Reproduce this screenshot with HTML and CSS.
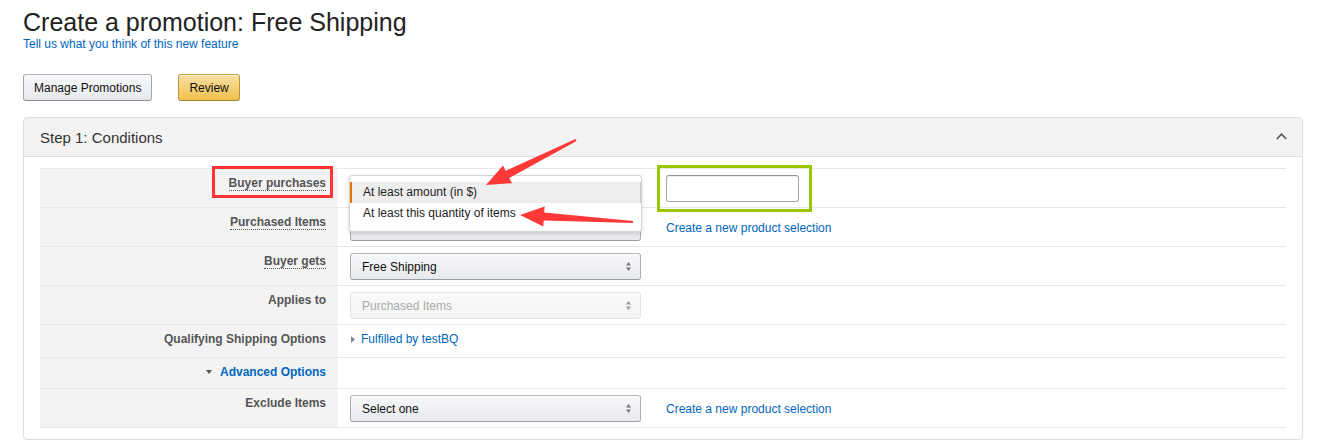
FILE: index.html
```
<!DOCTYPE html>
<html lang="en">
<head>
    <meta charset="UTF-8">
    <title>Create a promotion: Free Shipping</title>
    <link rel="stylesheet" href="styles.css">
</head>
<body>
<div class="page">
    <h1 class="title">Create a promotion: Free Shipping</h1>
    <a class="link feedback" href="#">Tell us what you think of this new feature</a>

    <div class="actions">
        <button class="btn">Manage Promotions</button>
        <button class="btn btn-primary">Review</button>
    </div>

    <div class="panel">
        <div class="panel-head">
            <span>Step 1: Conditions</span>
            <svg class="chevron" width="11" height="7" viewBox="0 0 11 7"><polyline points="0.8,6 5.5,1.2 10.2,6" fill="none" stroke="#555" stroke-width="1.6"/></svg>
        </div>
        <div class="panel-body">
            <div class="form-table">
                <!-- Buyer purchases -->
                <div class="row">
                    <div class="label"><span class="dotted">Buyer purchases</span></div>
                    <div class="value">
                        <div class="select select-open">
                            <span class="current">At least amount (in $)</span>
                            <svg class="caret" width="5" height="9" viewBox="0 0 5 9"><path d="M2.5 0 L5 3.5 H0 Z M0 5.5 H5 L2.5 9 Z" fill="#777"/></svg>
                            <ul class="dropdown">
                                <li class="active">At least amount (in $)</li>
                                <li>At least this quantity of items</li>
                            </ul>
                        </div>
                        <input class="text-input" type="text">
                    </div>
                </div>

                <!-- Purchased items -->
                <div class="row">
                    <div class="label"><span class="dotted">Purchased Items</span></div>
                    <div class="value">
                        <div class="select">
                            <span>Select one</span>
                            <svg class="caret" width="5" height="9" viewBox="0 0 5 9"><path d="M2.5 0 L5 3.5 H0 Z M0 5.5 H5 L2.5 9 Z" fill="#777"/></svg>
                        </div>
                        <a class="link" href="#">Create a new product selection</a>
                    </div>
                </div>

                <!-- Buyer gets -->
                <div class="row">
                    <div class="label"><span class="dotted">Buyer gets</span></div>
                    <div class="value">
                        <div class="select">
                            <span>Free Shipping</span>
                            <svg class="caret" width="5" height="9" viewBox="0 0 5 9"><path d="M2.5 0 L5 3.5 H0 Z M0 5.5 H5 L2.5 9 Z" fill="#777"/></svg>
                        </div>
                    </div>
                </div>

                <!-- Applies to -->
                <div class="row">
                    <div class="label">Applies to</div>
                    <div class="value">
                        <div class="select disabled">
                            <span>Purchased Items</span>
                            <svg class="caret" width="5" height="9" viewBox="0 0 5 9"><path d="M2.5 0 L5 3.5 H0 Z M0 5.5 H5 L2.5 9 Z" fill="#999"/></svg>
                        </div>
                    </div>
                </div>

                <!-- Shipping options -->
                <div class="row">
                    <div class="label">Qualifying Shipping Options</div>
                    <div class="value value-text">
                        <svg class="tri-right" width="4" height="7" viewBox="0 0 4 7"><path d="M0 0 L4 3.5 L0 7 Z" fill="#888"/></svg>
                        <a class="link" href="#">Fulfilled by testBQ</a>
                    </div>
                </div>

                <!-- Advanced options -->
                <div class="row row-short">
                    <div class="label">
                        <a class="link advanced" href="#">
                            <svg class="tri-down" width="6" height="4" viewBox="0 0 6 4"><path d="M0 0 H6 L3 4 Z" fill="#555"/></svg>
                            Advanced Options
                        </a>
                    </div>
                    <div class="value"></div>
                </div>

                <!-- Exclude items -->
                <div class="row">
                    <div class="label">Exclude Items</div>
                    <div class="value">
                        <div class="select">
                            <span>Select one</span>
                            <svg class="caret" width="5" height="9" viewBox="0 0 5 9"><path d="M2.5 0 L5 3.5 H0 Z M0 5.5 H5 L2.5 9 Z" fill="#777"/></svg>
                        </div>
                        <a class="link" href="#">Create a new product selection</a>
                    </div>
                </div>
            </div>
        </div>
    </div>

    <!-- annotazioni screenshot -->
    <div class="mark mark-red"></div>
    <div class="mark mark-green"></div>
    <svg class="arrows" width="1329" height="447" viewBox="0 0 1329 447">
        <polygon fill="#ff3838" points="486,185 512,183.2 509.3,177.9 576.5,140.9 575.5,139.1 505.7,170.7 503,165.4"/>
        <polygon fill="#ff3838" points="520,215 544.6,206.5 544.2,212.5 633,221 633,223 543.7,220.5 543.3,226.5"/>
    </svg>
</div>
</body>
</html>
```

FILE: styles.css
```
body {
    margin: 0;
    font-family: "Liberation Sans", Arial, sans-serif;
    color: #111;
    background: #fff;
}

.page {
    position: relative;
    width: 1280px;
    padding: 7px 23px 0;
}

.title {
    margin: 0;
    font-size: 25px;
    line-height: 30px;
    font-weight: normal;
    color: #222;
}

.link {
    color: #0066c0;
    text-decoration: none;
    font-size: 12px;
    line-height: 14px;
}

.feedback {
    display: block;
}

.actions {
    display: flex;
    gap: 26px;
    margin-top: 23px;
}

.btn {
    height: 27px;
    padding: 0 10px;
    font-family: inherit;
    font-size: 12px;
    color: #111;
    border: 1px solid #adb1b8;
    border-color: #adb1b8 #a2a6ac #8d9096;
    border-radius: 3px;
    background: linear-gradient(to bottom, #f7f8fa, #e7e9ec);
    box-shadow: 0 1px 0 rgba(255, 255, 255, 0.6) inset;
}

.btn-primary {
    border-color: #c8a140 #b8963a #a88734;
    background: linear-gradient(to bottom, #f7dfa5, #f0c14b);
}

.panel {
    margin-top: 16px;
    border: 1px solid #ddd;
    border-radius: 4px;
}

.panel-head {
    display: flex;
    align-items: center;
    justify-content: space-between;
    height: 38px;
    padding: 0 15px 0 16px;
    background: #f3f3f3;
    border-bottom: 1px solid #ddd;
    border-radius: 4px 4px 0 0;
    font-size: 15px;
    color: #333;
}

.chevron {
    margin-top: -1px;
}

.panel-body {
    padding: 11px 16px;
}

.row {
    display: grid;
    grid-template-columns: 298px 1fr;
    border-top: 1px solid #e7e7e7;
}

.row:last-child {
    border-bottom: 1px solid #e7e7e7;
}

.label {
    background: #f3f3f3;
    text-align: right;
    padding: 6px 12px 10px;
    font-size: 12px;
    line-height: 16px;
    font-weight: bold;
    color: #555;
}

.row-short .label {
    padding-bottom: 8px;
}

.dotted {
    border-bottom: 1px dotted #555;
}

.value {
    display: flex;
    align-items: center;
    gap: 25px;
    padding: 6px 12px 5px;
}

.value-text {
    gap: 6px;
    padding-bottom: 10px;
    align-items: center;
    height: 16px;
}

.value-text .tri-right {
    margin-left: 1px;
}

.select {
    position: relative;
    display: flex;
    align-items: center;
    justify-content: space-between;
    box-sizing: border-box;
    width: 291px;
    height: 27px;
    padding: 0 9px 0 11px;
    font-size: 12px;
    color: #111;
    border: 1px solid #adb1b8;
    border-color: #b4b7bd #aaadb3 #9a9da3;
    border-radius: 3px;
    background: linear-gradient(to bottom, #f7f8fa, #e7e9ec);
    box-shadow: 0 1px 0 rgba(255, 255, 255, 0.6) inset;
}

/* il valore corrente resta sotto la lista aperta */
.select-open .current {
    visibility: hidden;
}

.select.disabled {
    color: #aaa;
    border-color: #e3e3e3;
    background: linear-gradient(to bottom, #fafafa, #f3f3f3);
    box-shadow: none;
}

.dropdown {
    position: absolute;
    left: -2px;
    top: -1px;
    width: 293px;
    box-sizing: border-box;
    margin: 0;
    padding: 6px 0 7px;
    list-style: none;
    background: #fff;
    border: 1px solid #d5d5d5;
    border-radius: 3px;
    box-shadow: 0 2px 4px rgba(0, 0, 0, 0.15);
    z-index: 2;
}

.dropdown li {
    height: 21px;
    line-height: 21px;
    padding-left: 13px;
    font-size: 12px;
    color: #222;
}

.dropdown li.active {
    background: #eeeeee;
    border-left: 2px solid #e77600;
    border-right: 1px solid #c8c8c8;
    padding-left: 11px;
    box-sizing: border-box;
}

.text-input {
    box-sizing: border-box;
    width: 133px;
    height: 27px;
    margin: 0;
    padding: 0 6px;
    border: 1px solid #a6a6a6;
    border-top-color: #949494;
    border-radius: 3px;
    box-shadow: 0 1px 0 rgba(255, 255, 255, 0.5), 0 1px 0 rgba(0, 0, 0, 0.07) inset;
}

.advanced {
    font-size: 12px;
    line-height: 16px;
    font-weight: bold;
}

.tri-down {
    margin-right: 5px;
    vertical-align: 2px;
}

.mark {
    position: absolute;
    box-sizing: border-box;
    pointer-events: none;
    z-index: 5;
}

.mark-red {
    left: 212px;
    top: 166px;
    width: 121px;
    height: 32px;
    border: 3px solid #ff3333;
}

.mark-green {
    left: 657px;
    top: 165px;
    width: 155px;
    height: 47px;
    border: 3px solid #99c800;
}

.arrows {
    position: absolute;
    left: 0;
    top: 0;
    pointer-events: none;
    z-index: 5;
}
```
